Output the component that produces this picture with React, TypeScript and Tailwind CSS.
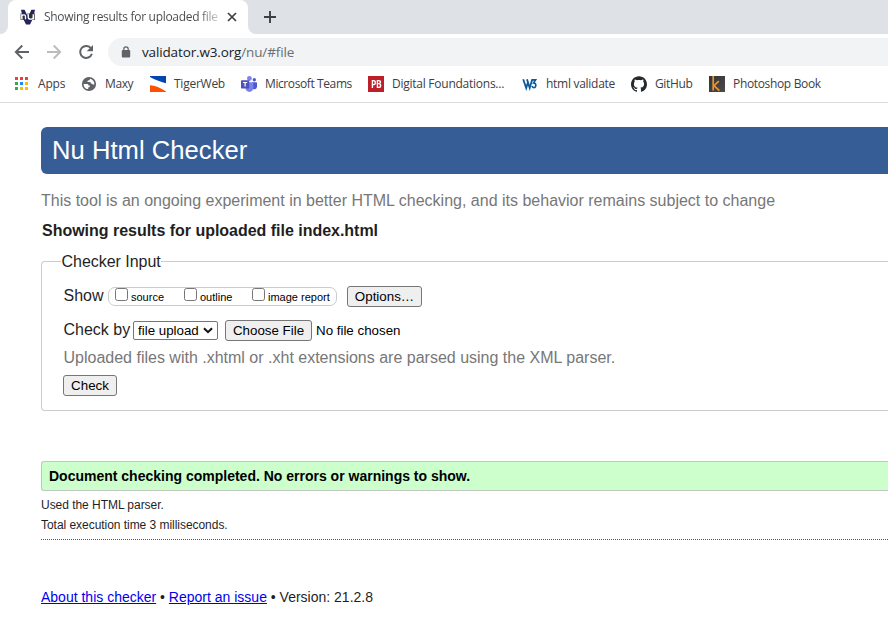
import type { ReactNode } from 'react';
import { SiGithub } from 'react-icons/si';

function NuIcon() {
  return (
    <svg width="16" height="16" viewBox="0 0 16 16">
      <path d="M1 .8h3.600L8 8l3.400-7.200H15L13.200 9 10 15.500H6L2.800 9z" fill="#23255e" />
      <path d="M.5 4.500h5.500v6.500H.5zM7.200 4.500h7.800v6.500H7.200z" fill="#333" opacity=".75" />
      <path d="M1.800 10.300V5.300M1.800 7c.7-1.600 3.700-1.500 3.700.4v2.900M8.300 5.300v3.100c0 2.300 4.900 2.300 4.900 0V5.300M13.400 5.300v5" stroke="#fff" strokeWidth="1.300" fill="none" />
    </svg>
  );
}

function AppsIcon() {
  const colors = ['#ea4335', '#ea4335', '#ea4335', '#34a853', '#1a8cf0', '#fbbc05', '#34a853', '#fbbc05', '#fbbc05'];
  return (
    <svg width="16" height="16" viewBox="0 0 16 16" shapeRendering="crispEdges">
      {colors.map((c, i) => (
        <rect key={i} x={1 + (i % 3) * 5} y={1 + Math.floor(i / 3) * 5} width="3" height="3" fill={c} />
      ))}
    </svg>
  );
}

function GlobeIcon() {
  return (
    <svg width="16" height="16" viewBox="0 0 16 16">
      <circle cx="8" cy="8" r="7.100" fill="#5f6368" />
      <path d="M2.600 8h3.200c1.200 0 1.700.6 1.800 1.500h1.300c.2 1.300-.6 1.800-1.700 1.900v1.700C4.700 13.300 2.600 11 2.600 8z" fill="#fff" />
      <path d="M9 2.800c0 1.300-.8 1.700-2.100 1.800 0 1-.4 1.300-1.300 1.400h3.200c.9 0 1.100.8 1.200 1.600.9 0 1.500.4 1.800 1h1.500c.4-2.700-1.600-5.200-4.300-5.800z" fill="#fff" />
    </svg>
  );
}

function TigerIcon() {
  return (
    <svg width="16" height="16" viewBox="0 0 16 16">
      <path d="M0 0h16v7.200C10 6 5 3.600 0 1z" fill="#0046ad" />
      <path d="M0 9.200c5 .4 10.500 2.400 16 6.400V16H0z" fill="#ff4f00" />
    </svg>
  );
}

function TeamsIcon() {
  return (
    <svg width="16" height="16" viewBox="0 0 16 16">
      <circle cx="13.300" cy="3.700" r="1.700" fill="#5059c9" />
      <path d="M11 6.200h4.300c.4 0 .7.300.7.700v3.700c0 1.600-1.100 2.600-2.400 2.600H11z" fill="#5059c9" />
      <circle cx="8.400" cy="2.500" r="2.400" fill="#7b83eb" />
      <path d="M4.500 6.200h7.200c.4 0 .7.300.7.700v4.700c0 2.600-1.800 4.400-4 4.400s-4-1.800-4-4.400z" fill="#7b83eb" />
      <rect x="0" y="4.200" width="8.200" height="8.200" rx=".7" fill="#4b53bc" />
      <path d="M2 6.500h4.200M4.100 6.500v4" stroke="#fff" strokeWidth="1.200" />
    </svg>
  );
}

function PbIcon() {
  return (
    <span className="flex h-4 w-4 items-center justify-center bg-[#bd2028] font-['Open_Sans',sans-serif] text-[10px] font-bold leading-4 tracking-[-0.3px] text-white">
      <span className="inline-block scale-x-85">PB</span>
    </span>
  );
}

function W3Icon() {
  return (
    <svg width="16" height="16" viewBox="0 0 16 16">
      <path d="M1.200 3.300 4.200 12 6.200 5.500M5 3.300 7.700 12 10.200 3.500" stroke="#0a5a9c" strokeWidth="1.800" fill="none" />
      <path d="M9.600 3.900h4L11.500 7c3.200.1 2.900 4.600.4 4.600-1.100 0-1.700-.6-2-1.500" stroke="#0a5a9c" strokeWidth="1.600" fill="none" />
    </svg>
  );
}

function KIcon() {
  return (
    <svg width="16" height="16" viewBox="0 0 16 16">
      <defs>
        <linearGradient id="k-bg" x1="0" y1="0" x2="1" y2="1">
          <stop offset="0" stopColor="#333" />
          <stop offset="1" stopColor="#4b4b4b" />
        </linearGradient>
      </defs>
      <rect width="16" height="16" fill="url(#k-bg)" />
      <path d="M4.200 0v14.600M9.800 5.200 5 9.700l5.400 5" stroke="#e8952f" strokeWidth="1.700" fill="none" />
    </svg>
  );
}

function Bookmark({ icon, label, className }: { icon: ReactNode; label: string; className: string }) {
  return (
    <div className="flex shrink-0 items-center gap-2">
      {icon}
      <span className={`block whitespace-nowrap ${className}`}>{label}</span>
    </div>
  );
}

function Browser() {
  return (
    <header className="h-[103px] border-b border-[#d9dbde] bg-white font-['Open_Sans',sans-serif] text-[#3c4043]">
      <div className="flex h-[34px] bg-[#dee1e6]">
        <div className="h-full w-2 bg-white">
          <div className="h-full rounded-br-lg bg-[#dee1e6]" />
        </div>
        <div className="flex h-full w-60 items-center rounded-t-lg bg-white pl-3">
          <NuIcon />
          <span className="ml-2 block w-[176px] whitespace-nowrap bg-[linear-gradient(90deg,#45494d_88%,#45494d30_100%)] bg-clip-text text-[12px] tracking-[-0.3px] text-transparent">
            Showing results for uploaded file
          </span>
          <svg className="ml-[7px]" width="10" height="10" viewBox="0 0 10 10">
            <path d="m1 1 8 8M9 1 1 9" stroke="#3c4043" strokeWidth="1.700" />
          </svg>
        </div>
        <div className="h-full w-2 bg-white">
          <div className="h-full rounded-bl-lg bg-[#dee1e6]" />
        </div>
        <svg className="ml-[7px] mt-[10px]" width="14" height="14" viewBox="0 0 14 14">
          <path d="M7 1v12M1 7h12" stroke="#3c4043" strokeWidth="1.900" />
        </svg>
      </div>
      <div className="flex h-[35px] items-center pl-[14px]">
        <svg width="16" height="16" viewBox="0 0 16 16">
          <path d="M15 8H2M8.300 1.500 1.800 8l6.500 6.500" stroke="#5f6368" strokeWidth="1.900" fill="none" />
        </svg>
        <svg className="ml-4" width="16" height="16" viewBox="0 0 16 16">
          <path d="M1 8h13M7.700 1.500 14.200 8l-6.500 6.500" stroke="#babcbe" strokeWidth="1.900" fill="none" />
        </svg>
        <svg className="ml-4" width="16" height="16" viewBox="0 0 16 16">
          <path d="M13.100 4.500A6 6 0 1 0 13.900 9.800" stroke="#5f6368" strokeWidth="2" fill="none" />
          <path d="M15 1v6.300H8.700z" fill="#5f6368" />
        </svg>
        <div className="ml-[14px] flex h-7 flex-1 items-center rounded-l-full bg-[#f1f3f4] pl-[13px]">
          <svg width="10" height="12" viewBox="0 0 10 12">
            <rect x=".8" y="4" width="8.400" height="7.600" rx="1" fill="#5f6368" />
            <path d="M2.800 4.500V3a2.200 2.200 0 0 1 4.400 0v1.500" stroke="#5f6368" strokeWidth="1.200" fill="none" />
          </svg>
          <span className="ml-[11px] mt-0.5 whitespace-nowrap text-[13.500px] tracking-[-0.14px] text-[#202124]">
            validator.w3.org<span className="text-[#6b6f73]">/nu/#file</span>
          </span>
        </div>
      </div>
      <nav className="flex h-[30px] items-center gap-4 pl-[14px] text-[12px]">
        <Bookmark icon={<AppsIcon />} label="Apps" className="w-[27px] tracking-[-0.2px]" />
        <Bookmark icon={<GlobeIcon />} label="Maxy" className="w-[29px] tracking-[-0.4px]" />
        <Bookmark icon={<TigerIcon />} label="TigerWeb" className="w-[51px] tracking-[-0.25px]" />
        <Bookmark icon={<TeamsIcon />} label="Microsoft Teams" className="w-[87px] tracking-[-0.4px]" />
        <Bookmark icon={<PbIcon />} label="Digital Foundations..." className="w-[114px] tracking-[-0.25px]" />
        <Bookmark icon={<W3Icon />} label="html validate" className="w-[69px] tracking-[-0.28px]" />
        <Bookmark icon={<SiGithub size={16} color="#24292e" />} label="GitHub" className="w-[38px] tracking-[-0.35px]" />
        <Bookmark icon={<KIcon />} label="Photoshop Book" className="w-[88px] tracking-[-0.34px]" />
      </nav>
    </header>
  );
}

function Check({ label, className }: { label: string; className: string }) {
  return (
    <label className={`flex items-center gap-[3px] text-[11px] leading-[17px] text-black ${className}`}>
      <input type="checkbox" className="-mt-[4px] h-[13px] w-[13px] appearance-none rounded-[2.500px] border border-[#767676] bg-white" />
      <span className="mt-px whitespace-nowrap">{label}</span>
    </label>
  );
}

const button = 'h-[21px] rounded-[3px] border border-[#767676] bg-[#efefef] text-center text-[13.333px] leading-[19px] whitespace-nowrap text-black';

export default function App() {
  return (
    <div className="h-[640px] w-full overflow-hidden bg-white font-['Liberation_Sans',Arial,sans-serif] text-[#1f1f1f]">
      <Browser />
      <main className="pl-[41px] pt-6">
        <h1 className="h-[47px] rounded-l-[6px] bg-[#365d95] pl-[11px] text-[25.600px] leading-[47px] tracking-[0.03px] text-white">Nu Html Checker</h1>
        <p className="mt-[17px] h-5 whitespace-nowrap text-[16px] leading-5 text-[#777]">
          This tool is an ongoing experiment in better HTML checking, and its behavior remains subject to change
        </p>
        <h2 className="mt-[10px] h-5 pl-px text-[16px] font-bold leading-5 tracking-[-0.02px]">Showing results for uploaded file index.html</h2>
        <fieldset className="mt-[11px] h-[159px] rounded-l-[4px] border border-r-0 border-[#ccc] pl-[21px]">
          <legend className="-ml-[2px] h-[19px] pl-[0.5px] text-[16px] leading-[19px] tracking-[-0.03px]">Checker Input</legend>
          <div className="mt-[15px] flex h-[21px] items-center">
            <span className="-mt-0.5 w-[45px] pl-[0.5px] text-[16px] leading-5">Show</span>
            <div className="flex h-[19px] w-[229px] items-center rounded-[7px] border border-[#ccc] pl-[6px]">
              <Check label="source" className="w-[69px]" />
              <Check label="outline" className="w-[68px]" />
              <Check label="image report" className="" />
            </div>
            <button className={`ml-[10px] w-[75px] ${button}`}>Options…</button>
          </div>
          <div className="mt-[13px] flex h-[21px] items-center">
            <span className="-mt-0.5 w-[70px] whitespace-nowrap pl-[0.5px] text-[16px] leading-5">Check by</span>
            <div className="flex h-[19px] w-[85px] items-center rounded-[2px] border border-[#767676] bg-white pl-1 text-[13.333px] leading-[17px] text-black">
              <span className="w-[64px] whitespace-nowrap">file upload</span>
              <svg className="ml-px" width="10" height="7" viewBox="0 0 10 7">
                <path d="m1 1.200 4 4 4-4" stroke="#111" strokeWidth="2" fill="none" />
              </svg>
            </div>
            <button className={`ml-[7px] w-[87px] ${button}`}>Choose File</button>
            <span className="ml-1 whitespace-nowrap text-[13.333px] text-black">No file chosen</span>
          </div>
          <p className="mt-[7px] h-5 whitespace-nowrap pl-[0.5px] text-[16px] leading-5 text-[#777]">
            Uploaded files with .xhtml or .xht extensions are parsed using the XML parser.
          </p>
          <button className={`mt-[7px] block w-[54px] ${button}`}>Check</button>
        </fieldset>
        <div className="mt-[50px] h-[30px] rounded-l-[3px] border border-r-0 border-[#c0c8c0] bg-[#cfc] pl-[7px] text-[14px] font-bold leading-7 text-black">
          Document checking completed. No errors or warnings to show.
        </div>
        <div className="h-[49px] border-b border-dotted border-[#555] pt-1 text-[12px] leading-5 tracking-[-0.04px]">
          <p>Used the HTML parser.</p>
          <p>Total execution time 3 milliseconds.</p>
        </div>
        <footer className="mt-[47px] whitespace-nowrap text-[14px] leading-5">
          <a className="text-[#0000ee] underline">About this checker</a> • <a className="text-[#0000ee] underline">Report an issue</a> • Version: 21.2.8
        </footer>
      </main>
    </div>
  );
}
